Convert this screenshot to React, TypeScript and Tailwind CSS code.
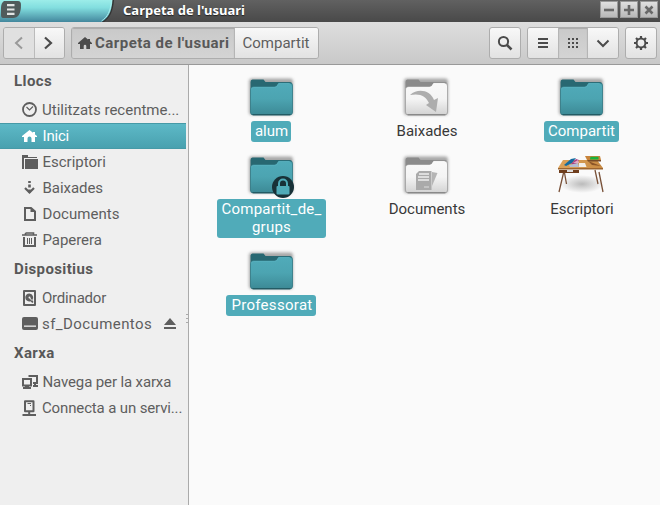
import React from "react";

type IconName = "clock" | "home" | "folder" | "download" | "document" | "trash" | "disk" | "drive" | "network" | "server";

function Home({ className = "" }: { className?: string }) {
  return (
    <svg width="14" height="13" viewBox="0 0 14 13" className={className} fill="currentColor">
      <path d="M7 0 0 6v1h2v5h3.7V9a1.3 1.3 0 0 1 2.6 0v3H12V7h2V6l-2-1.8V2h-2v.6z" />
    </svg>
  );
}

function SideIcon({ name }: { name: IconName }) {
  const line = { fill: "none", stroke: "currentColor", strokeWidth: 2 };
  return (
    <svg width="16" height="16" viewBox="0 0 16 16" className="shrink-0" fill="currentColor">
      {name === "clock" && (
        <>
          <circle cx="7.5" cy="7.5" r="6.5" {...line} strokeWidth={1.8} />
          <path d="m4.5 5 3 3 3.5-3.5" {...line} strokeWidth={1.2} />
        </>
      )}
      {name === "home" && <path d="M7.5 2 0 8v1h2v5h3.5v-3.5a2 2 0 0 1 4 0V14H13V9h2V8l-2-1.6V4h-2v.8z" />}
      {name === "folder" && (
        <>
          <path d="M0 1h6v2h9v1H2v11H0z" />
          <path d="M3 5h13v10H3z" />
        </>
      )}
      {name === "download" && (
        <>
          <path d="M6.2 1h2.6v2H6.2zM6.2 4.5h2.6v3H6.2z" />
          <path d="m3 8 4.5 4.5L12 8" {...line} strokeWidth={2.2} />
          <path d="M6.2 9.5h2.6v3H6.2z" />
        </>
      )}
      {name === "document" && (
        <>
          <path d="M3 2h6l4 3.5V14H3z" {...line} />
          <path d="M8.5 1.5V6H13z" />
        </>
      )}
      {name === "trash" && (
        <>
          <path d="M0 3h15M3.5 1h8v2" {...line} strokeWidth={1.6} />
          <path d="M3.5 1v2" {...line} strokeWidth={1.6} />
          <path d="M2 5v9h11V5" {...line} />
          <path d="M5.5 6v6M7.5 6v6M9.5 6v6" {...line} strokeWidth={1} />
        </>
      )}
      {name === "disk" && (
        <>
          <path d="M2 1h11v14H2z" {...line} strokeLinejoin="round" />
          <path d="M7.5 3.5a4 4 0 1 0 1 7.8l1.8 1.7 1.2-1-1.2-2A4 4 0 0 0 7.5 3.5z" />
          <path d="m7.5 7.5 2.3 3" stroke="#efefef" fill="none" />
          <circle cx="7.5" cy="7.5" r="1" fill="#efefef" />
        </>
      )}
      {name === "drive" && (
        <>
          <path d="M2 1h12q2 0 2 2v9q0 2-2 2H2q-2 0-2-2V3q0-2 2-2z" />
          <path d="M2 9.5h12v1.3H2z" fill="#efefef" />
        </>
      )}
      {name === "network" && (
        <>
          <path d="M7.5 3V2H15v7h-4" {...line} />
          <path d="M1 5h8v6.5H1z" {...line} />
          <path d="M3 12h4v1h2v2H1v-2h2zM12 10h2v1h2v2h-5v-2h1z" />
        </>
      )}
      {name === "server" && (
        <>
          <path d="M3 1.2h8.5v10H3z" {...line} strokeLinejoin="round" />
          <path d="M5.5 3.5H9" {...line} strokeWidth={1} />
          <path d="M8 5.5h1" {...line} strokeWidth={1} />
          <path d="M7.2 11v4M.5 15h13.5" {...line} />
        </>
      )}
    </svg>
  );
}

function Item({ icon, label, selected, spacing = "", eject }: { icon: IconName; label: string; selected?: boolean; spacing?: string; eject?: boolean }) {
  return (
    <div
      className={`flex h-[26px] w-[186px] items-center pl-[22px] ${
        selected ? "border-y border-[#469aa7] bg-gradient-to-b from-[#5db9c7] to-[#49a1af] text-white" : "text-[#5e5e5e]"
      }`}
    >
      <SideIcon name={icon} />
      <span className={`ml-1 whitespace-nowrap ${spacing}`}>{label}</span>
      {eject && (
        <svg width="12" height="11" viewBox="0 0 12 11" className="mr-[10px] mb-px ml-auto" fill="currentColor">
          <path d="m6 0 6 7H0zM0 9h12v2H0z" />
        </svg>
      )}
    </div>
  );
}

function Header({ children, spacing }: { children: React.ReactNode; spacing: string }) {
  return <div className={`flex h-8 items-center pl-[14px] font-bold text-[#585858] ${spacing}`}>{children}</div>;
}

type Kind = "teal" | "lock" | "down" | "docs" | "desk";

function FileIcon({ kind }: { kind: Kind }) {
  if (kind === "desk") {
    return (
      <svg width="48" height="48" viewBox="0 0 48 48">
        <defs>
          <radialGradient id="desk-shadow"><stop offset="0" stopColor="#bbb" /><stop offset="1" stopColor="#bbb" stopOpacity="0" /></radialGradient>
          <linearGradient id="desk-wood"><stop offset="0" stopColor="#dca35a" /><stop offset="1" stopColor="#c98b43" /></linearGradient>
        </defs>
        <ellipse cx="24" cy="34" rx="22" ry="9" fill="url(#desk-shadow)" />
        <path d="M5.5 23 1 42M41 22l4 20M6 20l2.5 14M37 20l3 14" stroke="#795138" strokeWidth="1.3" />
        <path d="M1 20h20v3H1z" fill="#6f3e1d" />
        <path d="M9 20h6v2H9z" fill="#ddd" />
        <path d="M5 10h34l6 8H0z" fill="url(#desk-wood)" />
        <path d="M0 18h45v1.6H0z" fill="#9c642f" />
        <path d="m30 11 13 5-9-1z" fill="#8b5528" />
        <path d="M27 6h15l1 4H29z" fill="#c8843b" />
        <path d="M29 10h14v1.5H30z" fill="#784b27" />
        <path d="M32.500 6.800h8v2.800h-8.500z" fill="#18b33b" />
        <path d="m6 15 7-6 5-1-4 5-6 3z" fill="#126ba0" />
        <path d="m13 14 5-5 3 1-4 5z" fill="#a83f86" />
        <path d="m15 13 5-3 1 3z" fill="#e3a9c3" />
        <path d="m11 15 9-2 1 4h-9z" fill="#b3bdd3" />
        <path d="M21 13h6l1.500 4h-7.500z" fill="#f2eee8" />
      </svg>
    );
  }
  const teal = kind === "teal" || kind === "lock";
  const id = "f-" + kind;
  return (
    <svg width="48" height="48" viewBox="0 0 48 48" className="overflow-visible">
      <defs>
        <linearGradient id={id} x2="0" y2="1">
          <stop offset="0" stopColor={teal ? "#50abb9" : "#f9f9f9"} />
          <stop offset=".5" stopColor={teal ? "#4ca4b1" : "#f4f4f4"} />
          <stop offset="1" stopColor={teal ? "#3c8995" : "#d2d2d2"} />
        </linearGradient>
        <filter id={id + "-blur"} x="-20%" y="-20%" width="140%" height="140%"><feGaussianBlur stdDeviation="1.8" /></filter>
      </defs>
      <rect x="1" y="6.5" width="44" height="36.500" rx="3" fill="#555" opacity=".5" filter={`url(#${id}-blur)`} />
      <path d="M2.500 10q0-2.500 2-2.500h11l2 2.500h24q3 0 3 3V40q0 3-3 3H5.500q-3 0-3-3z" fill={teal ? "#286872" : "#8b8b8b"} />
      <path d="M2.500 18q0-3.200 3-3.200h20.500q3 0 4-3l1-.8h10.500q3 0 3 3v26q0 3-3 3H5.500q-3 0-3-3z" fill={`url(#${id})`} stroke={teal ? "#327884" : "#9e9e9e"} strokeWidth=".7" />
      <path d="M4.500 42.800h38" stroke={teal ? "#1d4e56" : "#777"} strokeWidth="1.1" />
      <path d="M3.500 17.500q0-2 2-2h21q3 0 4-4h11" fill="none" stroke={teal ? "#5cb5c3" : "#fff"} strokeWidth=".7" />
      {kind === "down" && <path d="M7 23C15 16 27 18 31 28l4-2-2 14-10-7 3-2c-3-7-9-10-19-8z" fill="#adadad" />}
      {kind === "docs" && (
        <>
          <path d="m29 22 5.500 1-5.500 13z" fill="#b5b5b5" />
          <path d="m16 21 12.500 0v19H13V24z" fill="#aaa" />
          <path d="M16 24h10M15 27h11M15 30h11" stroke="#eee" strokeWidth="1.5" />
          <path d="M21 37h5" stroke="#ddd" />
        </>
      )}
      {kind === "lock" && (
        <>
          <circle cx="35" cy="37" r="11" fill="#183137" />
          <path d="M31 37v-3.500a4 4 0 0 1 8 0V37" fill="none" stroke="#4fabb8" strokeWidth="2" />
          <rect x="28.500" y="36" width="13" height="8.500" rx="1" fill="#4fabb8" />
        </>
      )}
    </svg>
  );
}

function File({ kind, selected, box = "", children }: { kind: Kind; selected?: boolean; box?: string; children: React.ReactNode }) {
  return (
    <div className="flex flex-col items-center">
      <FileIcon kind={kind} />
      <div className={`mt-px flex min-h-[21px] items-center justify-center rounded-[3px] pb-[2px] text-center leading-[18px] whitespace-nowrap ${selected ? "bg-[#50abb9] text-white" : "text-[#383838]"} ${box}`}>
        {children}
      </div>
    </div>
  );
}

function WinButton({ path }: { path: string }) {
  return (
    <div className="flex h-[17px] w-[18px] items-center justify-center border border-[#999] bg-gradient-to-b from-[#e0e0e0] to-[#b8b8b8]">
      <svg width="12" height="12" viewBox="0 0 12 12" fill="none" stroke="#686868" strokeWidth="2.6"><path d={path} /></svg>
    </div>
  );
}

const raised = "bg-gradient-to-b from-[#f8f8f8] to-[#e2e2e2]";
const pressed = "bg-gradient-to-b from-[#c9c9c9] to-[#d4d4d4] shadow-[inset_0_1px_1px_#aaa]";
const group = "flex h-8 overflow-hidden rounded-[3px] border border-[#adadad] text-[#4b4b4b]";

export default function App() {
  return (
    <div className="flex h-[505px] w-[660px] flex-col overflow-hidden bg-[#fafafa] font-[Roboto,sans-serif] text-[15px]">
      <header className="flex h-[22px] shrink-0 bg-gradient-to-b from-[#616161] to-[#494949]">
        <svg width="120" height="22" viewBox="0 0 120 22">
          <defs>
            <linearGradient id="title-tab" x2="0" y2="1"><stop offset="0" stopColor="#9cede9" /><stop offset=".35" stopColor="#82dedf" /><stop offset="1" stopColor="#43879d" /></linearGradient>
          </defs>
          <path d="M0 0h114c-1 12-4 17-10 22H0z" fill="#333" />
          <path d="M0 0h112.5c-1 12-4 18-11 22H0z" fill="url(#title-tab)" />
          <path d="M111.5 0c-1 12-4 17-10 21" fill="none" stroke="#aaf0ef" />
          <path d="M4 1h14q3 0 3 4c0 9-3 13-8 13H3q-2 0-2-3V8q0-5 3-7z" fill="#505b5c" />
          <path d="M7 5.2h7.5M7 9.5h7.5M7 13.8h7.5" stroke="#e2e5e5" strokeWidth="2.2" />
        </svg>
        <span className="ml-[3px] font-['Noto_Sans','Open_Sans',sans-serif] text-[13px] leading-[20px] font-bold whitespace-nowrap text-white [text-shadow:0_1px_1px_#222]">Carpeta de l'usuari</span>
        <div className="mt-px mr-[2px] ml-auto flex gap-[2px]">
          <WinButton path="M1 6h10" /><WinButton path="M1 6h10M6 1v10" /><WinButton path="m2.5 2.5 7 7m0-7-7 7" />
        </div>
      </header>

      <div className="flex h-[43px] shrink-0 items-start border-b border-[#999] bg-gradient-to-b from-[#dedede] to-[#c9c9c9] pt-[5px] pl-[3px]">
        <div className={`${group} w-[62px]`}>
          <div className="flex w-[30px] items-center justify-center bg-[#e0e0e0] text-[#999]">
            <svg width="10" height="14" viewBox="0 0 10 14" fill="none" stroke="currentColor" strokeWidth="2"><path d="M8 1.5 2 7l6 5.5" /></svg>
          </div>
          <div className={`flex flex-1 items-center justify-center border-l border-[#bbb] pr-[3px] ${raised}`}>
            <svg width="10" height="14" viewBox="0 0 10 14" fill="none" stroke="currentColor" strokeWidth="2.2"><path d="m2 1.5 6 5.5-6 5.5" /></svg>
          </div>
        </div>
        <div className={`${group} ml-[6px] w-[248px]`}>
          <div className={`flex w-[162px] shrink-0 items-center pl-[6px] ${pressed}`}>
            <Home />
            <span className="ml-[3px] font-bold tracking-[0.48px] whitespace-nowrap text-[#585858]">Carpeta de l'usuari</span>
          </div>
          <div className={`flex flex-1 items-center justify-center border-l border-[#b5b5b5] pr-px text-[#5e5e5e] ${raised}`}>Compartit</div>
        </div>
        <div className="mr-[3px] ml-auto flex gap-[6px]">
          <div className={`${group} w-8 items-center justify-center ${raised}`}>
            <svg width="16" height="16" viewBox="0 0 16 16" fill="none" stroke="currentColor" strokeWidth="2"><circle cx="6.5" cy="6.5" r="4.6" /><path d="m10 10 4.500 4.500" strokeWidth="2.6" /></svg>
          </div>
          <div className={`${group} w-[92px]`}>
            <div className={`flex w-[30px] items-center justify-center ${raised}`}>
              <svg width="10" height="10" viewBox="0 0 10 10" fill="currentColor"><path d="M0 0h10v2H0zM0 4h10v2H0zM0 8h10v2H0z" /></svg>
            </div>
            <div className={`flex w-[30px] items-center justify-center border-x border-[#b5b5b5] ${pressed}`}>
              <svg width="10" height="10" viewBox="0 0 10 10" fill="currentColor">
                {[0, 4, 8].map((y) => <path key={y} d={`M0 ${y}h2v2H0zM4 ${y}h2v2H4zM8 ${y}h2v2H8z`} />)}
              </svg>
            </div>
            <div className={`flex flex-1 items-center justify-center ${raised}`}>
              <svg width="14" height="9" viewBox="0 0 14 9" fill="none" stroke="currentColor" strokeWidth="2"><path d="m1.5 1.5 5.5 5.5 5.500-5.500" /></svg>
            </div>
          </div>
          <div className={`${group} w-8 items-center justify-center ${raised}`}>
            <svg width="14" height="14" viewBox="0 0 14 14" fill="none" stroke="currentColor">
              <circle cx="7" cy="7" r="4.4" strokeWidth="2" />
              <path d="M7 0v2.500M7 11.500V14M0 7h2.500M11.500 7H14M2 2l2 2M10 10l2 2M12 2l-2 2M4 10l-2 2" strokeWidth="2.2" />
            </svg>
          </div>
        </div>
      </div>

      <div className="flex flex-1">
        <aside className="relative w-[189px] shrink-0 border-r border-[#aaa] bg-[#efefef]">
          <Header spacing="tracking-[0.4px]">Llocs</Header>
          <Item icon="clock" label="Utilitzats recentme..." />
          <Item icon="home" label="Inici" selected spacing="tracking-[-0.2px] pl-[0.5px]" />
          <Item icon="folder" label="Escriptori" spacing="pl-[0.5px]" />
          <Item icon="download" label="Baixades" spacing="tracking-[-0.05px] pl-[0.5px]" />
          <Item icon="document" label="Documents" spacing="tracking-[0.05px] pl-[0.5px]" />
          <Item icon="trash" label="Paperera" spacing="tracking-[-0.05px] pl-[0.5px]" />
          <Header spacing="tracking-[0.38px]">Dispositius</Header>
          <Item icon="disk" label="Ordinador" spacing="tracking-[-0.2px]" />
          <Item icon="drive" label="sf_Documentos" eject spacing="tracking-[0.42px]" />
          <Header spacing="tracking-[0.4px]">Xarxa</Header>
          <Item icon="network" label="Navega per la xarxa" spacing="tracking-[-0.13px] pl-[0.5px]" />
          <Item icon="server" label="Connecta a un servi..." spacing="tracking-[-0.14px]" />
          <svg width="2" height="10" viewBox="0 0 2 10" className="absolute top-[249px] right-0" fill="#aaa"><path d="M0 0h2v1H0zM0 4h2v1H0zM0 8h2v1H0z" /></svg>
        </aside>
        <main className="grid flex-1 auto-rows-max grid-cols-[155px_155px_155px] content-start gap-y-2 pt-[7px] pl-[5.5px]">
          <File kind="teal" selected box="w-10 mr-[2px] pl-px">alum</File>
          <File kind="down">Baixades</File>
          <File kind="teal" selected box="w-[75px] mr-px">Compartit</File>
          <File kind="lock" selected box="h-[39px] w-[109px] mr-px tracking-[0.25px]"><span>Compartit_de_<br />grups</span></File>
          <File kind="docs">Documents</File>
          <File kind="desk">Escriptori</File>
          <File kind="teal" selected box="w-[90px] mr-[2px] pl-[2px] tracking-[0.3px]">Professorat</File>
        </main>
      </div>
    </div>
  );
}
